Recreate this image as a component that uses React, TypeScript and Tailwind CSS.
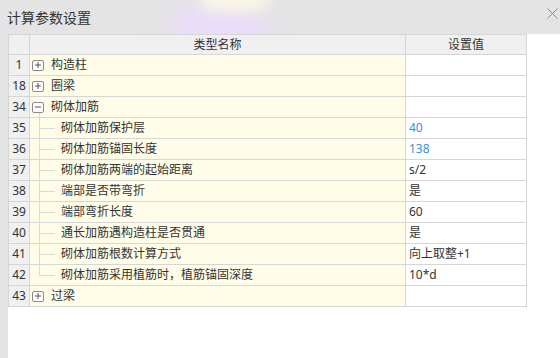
import React from "react";

type Row = {
  no: number;
  name: string;
  value?: string;
  blue?: boolean;
  kind: "group" | "child";
  open?: boolean;
  last?: boolean;
};

const rows: Row[] = [
  { no: 1, name: "构造柱", kind: "group" },
  { no: 18, name: "圈梁", kind: "group" },
  { no: 34, name: "砌体加筋", kind: "group", open: true },
  { no: 35, name: "砌体加筋保护层", value: "40", blue: true, kind: "child" },
  { no: 36, name: "砌体加筋锚固长度", value: "138", blue: true, kind: "child" },
  { no: 37, name: "砌体加筋两端的起始距离", value: "s/2", kind: "child" },
  { no: 38, name: "端部是否带弯折", value: "是", kind: "child" },
  { no: 39, name: "端部弯折长度", value: "60", kind: "child" },
  { no: 40, name: "通长加筋遇构造柱是否贯通", value: "是", kind: "child" },
  { no: 41, name: "砌体加筋根数计算方式", value: "向上取整+1", kind: "child" },
  { no: 42, name: "砌体加筋采用植筋时，植筋锚固深度", value: "10*d", kind: "child", last: true },
  { no: 43, name: "过梁", kind: "group" },
];

function ExpandBox({ open }: { open?: boolean }) {
  return (
    <div className="flex h-[11px] w-[12px] shrink-0 items-center justify-center rounded-[2px] border border-[#8a8a8a] bg-white">
      <svg width="8" height="8" viewBox="0 0 8 8">
        <line x1="1" y1="4" x2="7" y2="4" stroke="#555" strokeWidth="1" />
        {!open && <line x1="4" y1="1" x2="4" y2="7" stroke="#555" strokeWidth="1" />}
      </svg>
    </div>
  );
}

function NameCell({ row }: { row: Row }) {
  if (row.kind === "group") {
    return (
      <div className="relative flex h-full items-center pl-[2px]">
        <ExpandBox open={row.open} />
        <span className="ml-[7px]">{row.name}</span>
        {row.open && (
          <div className="absolute left-[9px] top-[16px] bottom-0 w-px bg-[#dadada]" />
        )}
      </div>
    );
  }
  return (
    <div className="relative flex h-full items-center pl-[31px]">
      <div
        className={
          row.last
            ? "absolute left-[9px] top-0 h-[10px] w-px bg-[#dadada]"
            : "absolute left-[9px] top-0 bottom-0 w-px bg-[#dadada]"
        }
      />
      <div className="absolute left-[9px] top-[10px] h-px w-[16px] bg-[#dadada]" />
      <span>{row.name}</span>
    </div>
  );
}

export default function App() {
  return (
    <div
      className="flex h-[358px] w-[560px] flex-col overflow-hidden bg-[#e4e4e4] text-[#333]"
      style={{ fontFamily: '"Noto Sans", "Noto Sans CJK SC", sans-serif' }}
    >
      <div className="relative flex h-[34px] shrink-0 items-center overflow-hidden px-[7px]">
        <div className="absolute left-[168px] top-[6px] h-[44px] w-[100px] rounded-full bg-[#e9dcfb] blur-[12px]" />
        <div className="absolute left-[200px] top-[-14px] h-[24px] w-[70px] rounded-full bg-[#fcf9e4] blur-[8px]" />
        <span className="relative text-[14px] text-[#333]">计算参数设置</span>
        <svg className="absolute right-[2px] top-[8px]" width="11" height="11" viewBox="0 0 11 11">
          <line x1="0.5" y1="0.5" x2="10.5" y2="10.5" stroke="#8a8a8a" strokeWidth="1" />
          <line x1="10.5" y1="0.5" x2="0.5" y2="10.5" stroke="#8a8a8a" strokeWidth="1" />
        </svg>
      </div>

      <div className="flex flex-1 pl-[8px]">
        <div className="flex-1 bg-white">
          <div className="w-[519px] border-l border-t border-[#d6d6d6] text-[12px] leading-none">
            <div className="flex h-[20px] border-b border-[#d6d6d6] bg-[#f0f0f0]">
              <div className="w-[21px] border-r border-[#d6d6d6]" />
              <div className="flex w-[376px] items-center justify-center border-r border-[#d6d6d6]">类型名称</div>
              <div className="flex w-[121px] items-center justify-center border-r border-[#d6d6d6]">设置值</div>
            </div>
            {rows.map((row) => (
              <div key={row.no} className="flex h-[21px] border-b border-[#d6d6d6]">
                <div className="flex w-[21px] items-center justify-center border-r border-[#d6d6d6] bg-[#f0f0f0]">
                  {row.no}
                </div>
                <div className="w-[376px] border-r border-[#d6d6d6] bg-[#fffde8]">
                  <NameCell row={row} />
                </div>
                <div
                  className={
                    row.blue
                      ? "flex w-[121px] items-center border-r border-[#d6d6d6] pl-[3px] text-[#3b8de4]"
                      : "flex w-[121px] items-center border-r border-[#d6d6d6] pl-[3px]"
                  }
                >
                  {row.value}
                </div>
              </div>
            ))}
          </div>
        </div>
      </div>
    </div>
  );
}
